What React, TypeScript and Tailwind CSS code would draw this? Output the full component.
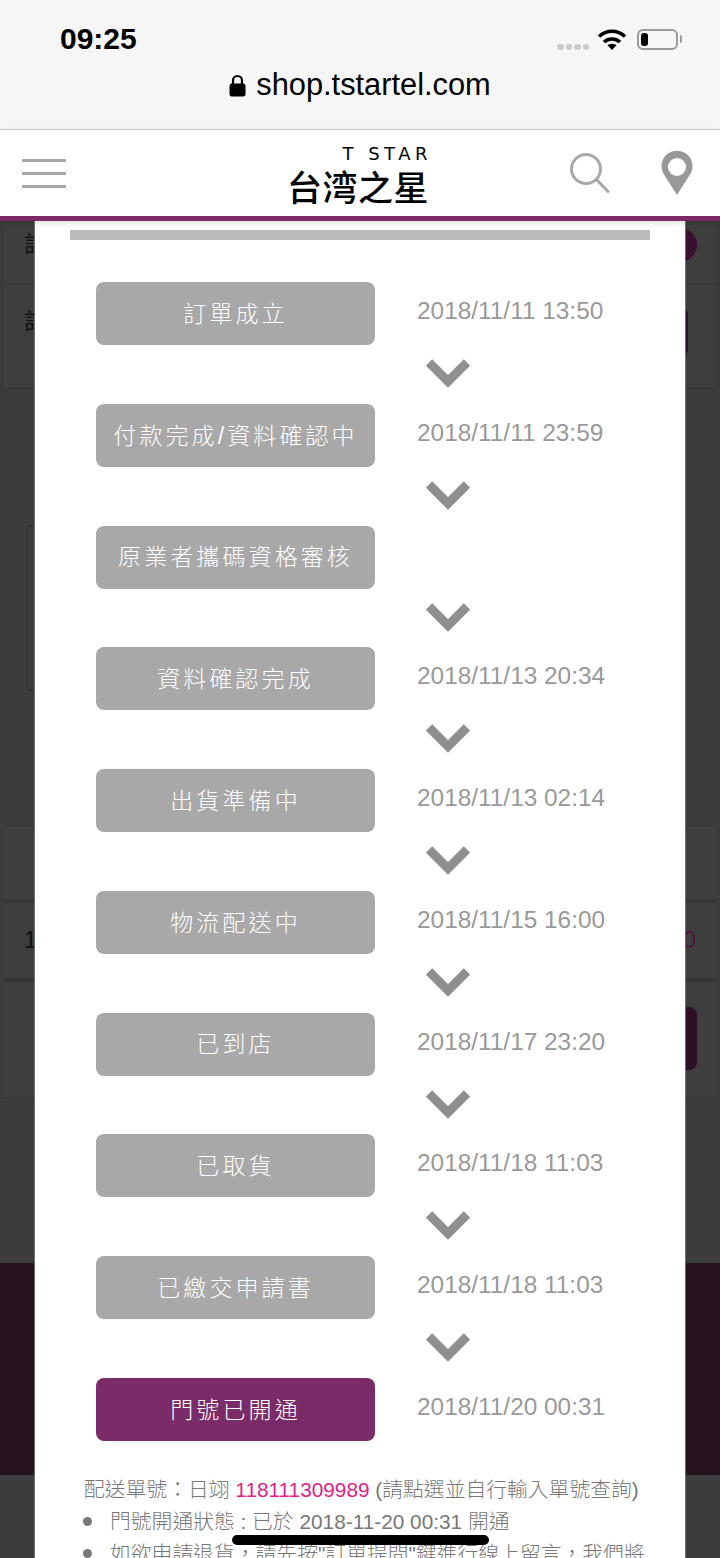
const steps = [
  { label: '訂單成立', date: '2018/11/11 13:50' },
  { label: '付款完成/資料確認中', date: '2018/11/11 23:59' },
  { label: '原業者攜碼資格審核', date: '' },
  { label: '資料確認完成', date: '2018/11/13 20:34' },
  { label: '出貨準備中', date: '2018/11/13 02:14' },
  { label: '物流配送中', date: '2018/11/15 16:00' },
  { label: '已到店', date: '2018/11/17 23:20' },
  { label: '已取貨', date: '2018/11/18 11:03' },
  { label: '已繳交申請書', date: '2018/11/18 11:03' },
  { label: '門號已開通', date: '2018/11/20 00:31', active: true },
]

const cjk = "font-['Liberation_Sans','Noto_Sans_CJK_TC',sans-serif]"

function Chevron() {
  return (
    <svg width="44" height="30" viewBox="0 0 44 30" className="block">
      <path d="M3 4.5 L22 23.5 L41 4.5" fill="none" stroke="#8f8f8f" strokeWidth="9" />
    </svg>
  )
}

function StatusIcons() {
  return (
    <div className="flex items-start">
      <div className="mt-[12px] flex gap-[2px]">
        <div className="h-[6px] w-[6.5px] rounded-full bg-[#cccccc]" />
        <div className="h-[6px] w-[6.5px] rounded-full bg-[#cccccc]" />
        <div className="h-[6px] w-[6.5px] rounded-full bg-[#cccccc]" />
        <div className="h-[6px] w-[6.5px] rounded-full bg-[#cccccc]" />
      </div>
      <svg width="30" height="22" viewBox="0 0 30 22" className="ml-[8px] -mt-[3px]">
        <path d="M2 7.5 C9.5 0.5 20.5 0.5 28 7.5" fill="none" stroke="#000" strokeWidth="3.6" />
        <path d="M7 13 C11.5 9 18.5 9 23 13" fill="none" stroke="#000" strokeWidth="3.6" />
        <path d="M10.5 16.2 L15 21 L19.5 16.2 C17 14.2 13 14.2 10.5 16.2 Z" fill="#000" />
      </svg>
      <div className="-mt-[3px] ml-[10px] flex h-[21px] w-[41px] items-center rounded-[6px] border-2 border-[#9a9a9a] px-[2px]">
        <div className="h-[13px] w-[7px] rounded-[3px] bg-black" />
      </div>
      <div className="ml-[2px] mt-[3px] h-[8px] w-[2px] rounded-r bg-[#9a9a9a]" />
    </div>
  )
}

function BrowserBar() {
  return (
    <div className="h-[130px] border-b border-[#cccccc] bg-[#f6f6f6] text-black font-['Liberation_Sans',sans-serif]">
      <div className="flex justify-between pl-[60px] pr-[38px] pt-[22px]">
        <span className="text-[30px] leading-[34px] font-bold">09:25</span>
        <div className="pt-[10px]">
          <StatusIcons />
        </div>
      </div>
      <div className="mt-[11px] flex items-center justify-center">
        <svg width="17" height="23" viewBox="0 0 17 23" className="mr-[10px]">
          <path d="M4 10 V6.5 a4.5 4.5 0 0 1 9 0 V10" fill="none" stroke="#000" strokeWidth="2.2" />
          <rect x="0.5" y="9.5" width="16" height="13" rx="2.5" fill="#000" />
        </svg>
        <span className="text-[30.8px] leading-[36px]">shop.tstartel.com</span>
      </div>
    </div>
  )
}

function SiteHeader() {
  return (
    <div className="relative z-20 flex h-[91px] items-start border-b-[5px] border-[#7b2c68] bg-white shadow-[0_2px_7px_rgba(0,0,0,0.12)]">
      <div className="ml-[22px] mt-[29px] flex w-[44px] flex-col gap-[10px]">
        <div className="h-[3px] bg-[#a8a8a8]" />
        <div className="h-[3px] bg-[#a8a8a8]" />
        <div className="h-[3px] bg-[#a8a8a8]" />
      </div>
      <div className="ml-[222px] mt-[14px] flex w-[141px] flex-col items-end">
        <span className="-mr-[3px] text-[18px] leading-[20px] tracking-[4.5px] whitespace-nowrap text-black font-['DejaVu_Sans',sans-serif]">T STAR</span>
        <span className="mt-[6px] text-[35px] leading-[32px] font-medium tracking-[0.5px] text-black whitespace-nowrap font-['Noto_Sans_CJK_SC',sans-serif]">台湾之星</span>
      </div>
      <svg width="44" height="44" viewBox="0 0 44 44" className="ml-[140px] mt-[22px]">
        <circle cx="17" cy="17" r="14.5" fill="none" stroke="#a8a8a8" strokeWidth="3" />
        <path d="M27.5 27.5 L39 39.5" stroke="#a8a8a8" strokeWidth="3" strokeLinecap="round" />
      </svg>
      <svg width="32" height="46" viewBox="0 0 32 46" className="ml-[48px] mt-[20px]">
        <path d="M16 45 L4 26 A15.5 15.5 0 1 1 28 26 Z" fill="#999999" />
        <circle cx="16" cy="17" r="9" fill="#ffffff" />
      </svg>
    </div>
  )
}

// dimmed shop page behind the modal
function DimmedPage() {
  return (
    <div className="h-[1337px] bg-[#3c3c3c] text-[#111111] font-['Liberation_Sans','Noto_Sans_CJK_TC',sans-serif]">
      <div className="ml-[2px] mr-[3px] flex h-[63px] items-center justify-between border border-[#373737] bg-[#3e3e3e] pl-[21px]">
        <span className="-mt-[16px] text-[23px]">訂</span>
        <div className="-mt-[16px] mr-[19px] h-[34px] w-[34px] rounded-full bg-[#3a0f30]" />
      </div>
      <div className="ml-[2px] mr-[3px] flex h-[105px] items-center justify-between border border-t-0 border-[#373737] bg-[#3e3e3e] pl-[21px]">
        <span className="-mt-[30px] text-[23px]">訂</span>
        <div className="-mt-[8px] mr-[28px] h-[46px] w-[60px] rounded-[5px] bg-[#2c1026]" />
      </div>
      <div className="ml-[26px] mt-[136px] h-[166px] w-[400px] border-2 border-[#353535]" />
      <div className="mt-[134px] ml-[2px] mr-[3px] h-[74px] border-t border-[#373737] bg-[#3e3e3e]" />
      <div className="ml-[2px] mr-[3px] flex h-[79px] items-center justify-between border-t-[4px] border-[#363636] bg-[#3e3e3e] pl-[22px] pr-[21px]">
        <span className="text-[23px]">1</span>
        <span className="text-[23px] text-[#4d1440]">0</span>
      </div>
      <div className="ml-[2px] mr-[3px] flex h-[120px] items-center justify-end border-t-[4px] border-b border-t-[#363636] border-b-[#373737] bg-[#3e3e3e] pr-[20px]">
        <div className="-mt-[2px] h-[63px] w-[80px] rounded-[8px] bg-[#2c1026]" />
      </div>
      <div className="mt-[165px] h-[212px] bg-[#26121f]" />
    </div>
  )
}

function Modal() {
  return (
    <div className="absolute left-[34px] top-[221px] z-10 h-[1337px] w-[652px] overflow-hidden border-x border-[#6e6e6e] bg-white">
      <div className="mx-[35px] mt-[9px] h-[10px] bg-[#bbbbbb]" />
      <div className="mt-[42px] pl-[61px]">
        {steps.map((step, i) => (
          <div key={step.label}>
            <div className="flex h-[63px] items-start">
              <div
                className={`flex h-[63px] w-[279px] items-center justify-center rounded-[8px] pt-[1px] text-[23px] tracking-[3.1px] whitespace-nowrap text-white font-light ${cjk} ${
                  step.active ? 'bg-[#7b2c68]' : 'bg-[#a8a8a8]'
                }`}
              >
                {step.label}
              </div>
              <span className="ml-[42px] mt-[14px] text-[24.4px] leading-[30px] text-[#999999] font-['Liberation_Sans',sans-serif]">
                {step.date}
              </span>
            </div>
            {i < steps.length - 1 && (
              <div className="h-[58.78px] pl-[330px] pt-[13px]">
                <Chevron />
              </div>
            )}
          </div>
        ))}
      </div>
      <div className={`mt-[33px] pl-[49px] text-[20.8px] leading-[32px] font-light whitespace-nowrap text-[#777777] ${cjk}`}>
        <p>
          配送單號：日翊 <span className="text-[#e0218a]">118111309989</span> (請點選並自行輸入單號查詢)
        </p>
        <div className="flex items-center">
          <div className="ml-[-1px] h-[9px] w-[9px] rounded-full bg-[#777777]" />
          <span className="ml-[18px]">門號開通狀態 : 已於 2018-11-20 00:31 開通</span>
        </div>
        <div className="flex items-center">
          <div className="ml-[-1px] h-[9px] w-[9px] rounded-full bg-[#777777]" />
          <span className="ml-[18px]">如欲申請退貨，請先按"訂單提問"鍵進行線上留言，我們將</span>
        </div>
      </div>
    </div>
  )
}

export default function App() {
  return (
    <div className="relative h-[1558px] w-[720px] overflow-hidden bg-[#3c3c3c]">
      <BrowserBar />
      <SiteHeader />
      <DimmedPage />
      <Modal />
      {/* home indicator */}
      <div className="absolute bottom-[13px] left-[232px] z-30 h-[10px] w-[257px] rounded-full bg-black" />
    </div>
  )
}
